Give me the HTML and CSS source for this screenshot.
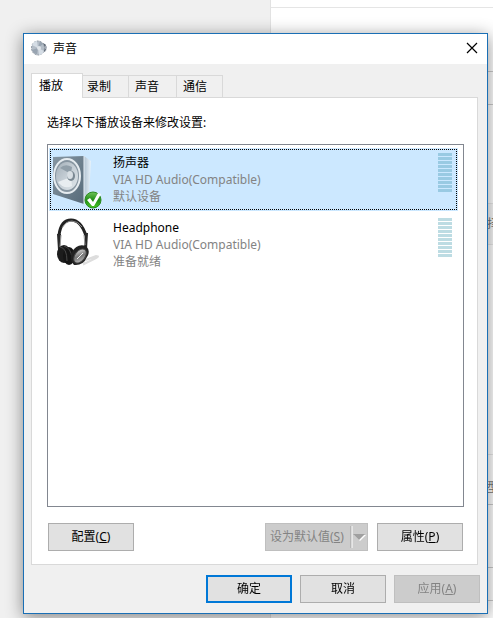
FILE: index.html
```html
<!DOCTYPE html>
<html lang="zh-CN">

<head>
    <meta charset="UTF-8">
    <meta name="viewport" content="width=device-width, initial-scale=1.0">
    <title>声音</title>
    <link rel="stylesheet" href="styles.css">
</head>

<body>
    <!-- 后面的窗口 -->
    <div class="back">
        <div class="back-side"></div>
        <div class="back-main">
            <div class="back-head"></div>
            <div class="back-row row1"></div>
            <div class="back-row row2"></div>
            <div class="back-row row3 light"></div>
            <div class="back-row row4 light"><span>择</span></div>
            <div class="back-row row5 light"></div>
            <div class="back-row row6"><span>型</span></div>
            <div class="back-row row7"></div>
            <div class="back-row row2"></div>
        </div>
    </div>

    <!-- 声音对话框 -->
    <div class="dialog">
        <div class="title">
            <svg class="title-icon" width="16" height="16" viewBox="0 0 16 16">
                <path d="M9 3l5 1 2 3-1 4-5 3z" fill="#a2a9b3"/>
                <path d="M12 3l3 2-2 2zM12 9l3 0-2 3z" fill="#565f6d"/>
                <ellipse cx="7" cy="8" rx="6.5" ry="7" fill="#b4bdc7" stroke="#8d96a0" stroke-dasharray="2 1"/>
                <path d="M7 8L1 5Q3 1 6 1zM7 8l6 3Q11 15 8 15z" fill="#d5dde5"/>
                <path d="M7 8L1 10Q3 14 6 14zM7 8l2-7 3 3z" fill="#98a4b1"/>
                <circle cx="8" cy="8" r="2" fill="#dfe4e9"/>
            </svg>
            <span class="title-text">声音</span>
            <button class="close" aria-label="关闭">
                <svg width="12" height="12" viewBox="0 0 12 12">
                    <path d="M1 1l10 10M11 1L1 11" stroke="#000" stroke-width="1.2"/>
                </svg>
            </button>
        </div>

        <div class="content">
            <div class="tabs">
                <button class="tab active">播放</button>
                <button class="tab">录制</button>
                <button class="tab">声音</button>
                <button class="tab">通信</button>
            </div>

            <div class="panel">
                <p class="tip">选择以下播放设备来修改设置:</p>
                <div class="list">
                    <div class="item selected">
                        <svg class="device" width="52" height="60" viewBox="0 0 52 60">
                            <defs>
                                <linearGradient id="face" x1="0" y1="0" x2="1" y2="1">
                                    <stop offset="0" stop-color="#8797a3"/>
                                    <stop offset="1" stop-color="#566a79"/>
                                </linearGradient>
                                <linearGradient id="side" x1="0" y1="0" x2="1" y2="0">
                                    <stop offset="0" stop-color="#b3c4d2"/>
                                    <stop offset="1" stop-color="#e9f3fb"/>
                                </linearGradient>
                                <linearGradient id="cone" x1="0" y1="0" x2="1" y2="1">
                                    <stop offset="0" stop-color="#a3afb8"/>
                                    <stop offset="0.5" stop-color="#c6cfd6"/>
                                    <stop offset="1" stop-color="#dfe6ea"/>
                                </linearGradient>
                                <linearGradient id="ok" x1="0" y1="0" x2="0" y2="1">
                                    <stop offset="0" stop-color="#70c45a"/>
                                    <stop offset="0.5" stop-color="#218d16"/>
                                    <stop offset="1" stop-color="#49c923"/>
                                </linearGradient>
                            </defs>
                            <path d="M32 7l7 5-2 34-5 8z" fill="url(#side)"/>
                            <path d="M1 8L32 7v48L1 45z" fill="url(#face)"/>
                            <path d="M32 7v48" stroke="#eaf2f8"/>
                            <ellipse cx="15" cy="27" rx="13" ry="17" fill="#8795a0" stroke="#e5ebef" stroke-width="2"/>
                            <ellipse cx="15" cy="27" rx="11" ry="14" fill="url(#cone)"/>
                            <path d="M6 33Q12 41 20 37L19 28z" fill="#e8edf0"/>
                            <path d="M8 19Q13 14 20 18L19 25z" fill="#919fa9"/>
                            <ellipse cx="19" cy="27" rx="4" ry="5" fill="#7b8993"/>
                            <ellipse cx="18" cy="26" rx="3" ry="4" fill="#d8dfe4"/>
                            <circle cx="41" cy="51" r="8" fill="url(#ok)" stroke="#2b8b20"/>
                            <path d="M35 51l3-2 3 4 5-9 3 1-7 12h-2z" fill="#fff"/>
                        </svg>
                        <div class="info">
                            <div class="name">扬声器</div>
                            <div>VIA HD Audio(Compatible)</div>
                            <div>默认设备</div>
                        </div>
                        <div class="meter"></div>
                    </div>
                    <div class="item">
                        <svg class="device" width="52" height="60" viewBox="0 0 52 60">
                            <defs>
                                <linearGradient id="cup" x1="0" y1="0" x2="1" y2="1">
                                    <stop offset="0" stop-color="#f2f2f2"/>
                                    <stop offset="0.5" stop-color="#777"/>
                                    <stop offset="1" stop-color="#ccc"/>
                                </linearGradient>
                            </defs>
                            <path d="M31 47l13-5q4 0 0 2l-12 6z" fill="none" stroke="#ddd" stroke-width="2"/>
                            <path d="M7 21Q9 6 19 6T34 22" fill="none" stroke="#222" stroke-width="3"/>
                            <path d="M10 14Q14 7 20 7T30 13" fill="none" stroke="#888"/>
                            <path d="M5 20h4l-1 16H6zM33 19h3l-1 16h-3z" fill="#292929"/>
                            <path d="M9 21l-1 12M32 21l1 10" stroke="#999"/>
                            <ellipse cx="12" cy="40" rx="7" ry="9" fill="#1c1c1c"/>
                            <ellipse cx="17" cy="42" rx="6" ry="9" fill="#151515"/>
                            <path d="M8 33q7 1 7 14M12 32q7 2 8 12" fill="none" stroke="#484848"/>
                            <path d="M20 38Q25 29 34 32q5 5 1 11-4 9-13 8-5-5-2-13z" fill="#222"/>
                            <ellipse cx="28" cy="42" rx="5" ry="8" transform="rotate(38 28 42)" fill="url(#cup)" stroke="#444"/>
                            <path d="M25 45l6-6" stroke="#eee"/>
                        </svg>
                        <div class="info">
                            <div class="name">Headphone</div>
                            <div>VIA HD Audio(Compatible)</div>
                            <div>准备就绪</div>
                        </div>
                        <div class="meter"></div>
                    </div>
                </div>

                <div class="actions">
                    <button class="btn">配置(<u>C</u>)</button>
                    <button class="btn split" disabled>
                        <span>设为默认值(<u>S</u>)</span>
                        <svg class="arrow" width="17" height="22" viewBox="0 0 17 22">
                            <path d="M1 0v22" stroke="#a0a0a0" stroke-width="1"/>
                            <path d="M2 0v22" stroke="#fff" stroke-width="1"/>
                            <path d="M4 9h12l-6 6z" fill="#fff"/>
                            <path d="M3 8h12l-6 6z" fill="#a0a0a0"/>
                        </svg>
                    </button>
                    <button class="btn">属性(<u>P</u>)</button>
                </div>
            </div>

            <div class="footer">
                <button class="btn primary">确定</button>
                <button class="btn">取消</button>
                <button class="btn" disabled>应用(<u>A</u>)</button>
            </div>
        </div>
    </div>
</body>

</html>
```
FILE: styles.css
```css
* {
    box-sizing: border-box;
}

body {
    margin: 0;
    min-height: 100vh;
    padding: 33px 5px 4px 23px;
    display: flex;
    font-family: "Noto Sans", "Noto Sans CJK SC", sans-serif;
    font-size: 12px;
    line-height: 17px;
    color: #000;
}

button {
    font: inherit;
    color: inherit;
    padding: 0;
}

/* 后面的窗口 */
.back {
    position: fixed;
    inset: 0;
    z-index: -1;
    display: flex;
    overflow: hidden;
}

.back-side {
    width: 271px;
    background-color: #f0f0f0;
    border-right: 1px solid #e2e2e2;
}

.back-main {
    flex: 1;
    background-color: #fff;
}

.back-head {
    height: 8px;
    border-bottom: 1px solid #e5e5e5;
}

.back-row {
    border-bottom: 1px solid #ccc;
    text-align: right;
    color: #777;
}

.back-row.light {
    border-color: #e8e8e8;
}

.back-row span {
    margin-right: -6px;
}

.row1 {
    height: 64px;
}

.row2 {
    height: 33px;
}

.row3 {
    height: 99px;
}

.row4 {
    height: 41px;
    padding-top: 11px;
    background-color: #f8f8f8;
}

.row5 {
    height: 210px;
}

.row6 {
    height: 50px;
    padding-top: 24px;
}

.row7 {
    height: 63px;
}

/* 对话框 */
.dialog {
    flex: 1;
    display: flex;
    flex-direction: column;
    border: 1px solid #1a6fb5;
    background-color: #f0f0f0;
    box-shadow: 0 3px 16px rgba(0, 0, 0, 0.45);
}

.title {
    height: 30px;
    padding: 0 8px 2px 7px;
    display: flex;
    align-items: center;
    background-color: #fff;
}

.title-text {
    flex: 1;
    margin-left: 6px;
}

.close {
    width: 15px;
    height: 16px;
    border: none;
    background: none;
    line-height: 0;
}

.content {
    flex: 1;
    display: flex;
    flex-direction: column;
    padding: 9px 9px 10px 7px;
}

.tabs {
    display: flex;
    align-items: flex-end;
}

.tab {
    width: 48px;
    height: 22px;
    padding-left: 6px;
    border: 1px solid #d9d9d9;
    border-width: 1px 1px 0 0;
    background-color: #f0f0f0;
    text-align: left;
}

.tab:last-child {
    width: 46px;
}

.tab.active {
    width: 52px;
    height: 25px;
    margin-right: -2px;
    margin-bottom: -1px;
    padding: 0 0 2px 7px;
    border-left-width: 1px;
    background-color: #fff;
    z-index: 1;
}

.panel {
    flex: 1;
    display: flex;
    flex-direction: column;
    padding: 16px 13px 13px 15px;
    border: 1px solid #d9d9d9;
    background-color: #fff;
}

.tip {
    margin: 0 0 13px;
}

/* 设备列表 */
.list {
    flex: 1;
    padding: 3px 5px 0 1px;
    border: 1px solid #828790;
}

.item {
    height: 63px;
    margin-bottom: 2px;
    padding: 1px 6px 0 3px;
    display: flex;
}

.item.selected {
    background-color: #cce8ff;
    outline: 1px dotted #000;
    outline-offset: -2px;
}

.info {
    flex: 1;
    margin-left: 9px;
    padding-top: 5px;
    color: #838383;
}

.name {
    color: #000;
}

.meter {
    width: 14px;
    height: 39px;
    margin-top: 4px;
    background: repeating-linear-gradient(#bddce3 0 3px, transparent 3px 4px);
}

.selected .meter {
    background: repeating-linear-gradient(#99cae3 0 3px, transparent 3px 4px);
}

/* 按钮 */
.btn {
    width: 86px;
    height: 28px;
    padding-bottom: 2px;
    border: 1px solid #adadad;
    background-color: #e1e1e1;
}

.btn:disabled {
    border-color: #bfbfbf;
    background-color: #ccc;
    color: #838383;
}

.btn.primary {
    border: 2px solid #0078d7;
}

.actions {
    display: flex;
    gap: 9px;
    margin-top: 16px;
    padding: 0 1px;
}

.split {
    width: 103px;
    margin-left: auto;
    padding-left: 4px;
    display: flex;
    align-items: center;
}

.split span {
    flex: 1;
    text-align: left;
}

.arrow {
    margin-top: 2px;
}

.footer {
    display: flex;
    justify-content: flex-end;
    gap: 8px;
    margin-top: 10px;
    margin-right: -2px;
}
```
